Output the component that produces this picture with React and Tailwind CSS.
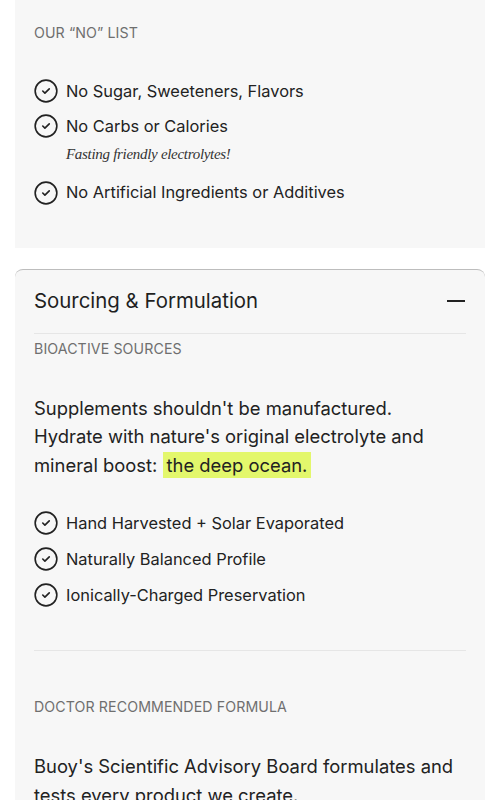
import React from 'react';
import { CircleCheck } from 'lucide-react';

const sans = { fontFamily: 'Inter, "Noto Sans", sans-serif' };

function CheckItem({ children, note }) {
  return (
    <li>
      <div className="flex items-center gap-[7px] h-[24px]">
        <CircleCheck className="w-[26px] h-[26px] -ml-[1px] text-[#222] shrink-0" strokeWidth={1.5} />
        <span className="text-[16.4px] text-[#222]">{children}</span>
      </div>
      {note && (
        <p
          className="mt-[5px] mb-[4px] ml-[32px] text-[15px] italic text-[#333] tracking-[-0.3px]"
          style={{ fontFamily: '"Liberation Serif", serif' }}
        >
          {note}
        </p>
      )}
    </li>
  );
}

function Label({ children }) {
  return (
    <h4 className="text-[14.2px] leading-[20px] uppercase text-[#6f6f6f] tracking-[0.1px]">
      {children}
    </h4>
  );
}

export default function App() {
  return (
    <div className="bg-white min-h-[800px] px-[15px]" style={sans}>
      {/* NO LIST */}
      <section className="bg-[#f7f7f7] px-[19px] pt-[23px] pb-[43px]">
        <Label>OUR “NO” LIST</Label>
        <ul className="mt-[36px] flex flex-col gap-[11px]">
          <CheckItem>No Sugar, Sweeteners, Flavors</CheckItem>
          <CheckItem note="Fasting friendly electrolytes!">No Carbs or Calories</CheckItem>
          <CheckItem>No Artificial Ingredients or Additives</CheckItem>
        </ul>
      </section>

      {/* SOURCING */}
      <section className="mt-[21px] bg-[#f7f7f7] rounded-t-[8px] border-t border-[#bdbdbd] px-[19px]">
        <div className="flex items-center justify-between h-[64px] border-b border-[#e6e6e6]">
          <h3 className="text-[20.4px] text-[#1f1f1f]">Sourcing &amp; Formulation</h3>
          <span className="block w-[18px] h-[2px] bg-[#222] mr-[1px]" />
        </div>

        <div className="pt-[5px]">
          <Label>BIOACTIVE SOURCES</Label>
          <p className="mt-[35px] text-[18.4px] leading-[28.5px] text-[#222]">
            Supplements shouldn't be manufactured.
            <br />
            Hydrate with nature's original electrolyte and mineral boost:{' '}
            <span className="bg-[#e3f76c] px-[4px] py-[2px]">the deep ocean.</span>
          </p>
          <ul className="mt-[32px] flex flex-col gap-[12px]">
            <CheckItem>Hand Harvested + Solar Evaporated</CheckItem>
            <CheckItem>Naturally Balanced Profile</CheckItem>
            <CheckItem>Ionically-Charged Preservation</CheckItem>
          </ul>
        </div>

        <div className="mt-[43px] border-t border-[#e6e6e6] pt-[46px]">
          <Label>DOCTOR RECOMMENDED FORMULA</Label>
          <p className="mt-[35px] text-[18.4px] leading-[28.5px] text-[#222]">
            Buoy's Scientific Advisory Board formulates and tests every product we create.
          </p>
        </div>
      </section>
    </div>
  );
}
